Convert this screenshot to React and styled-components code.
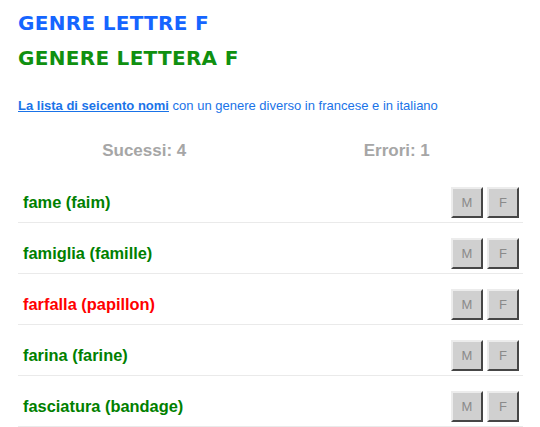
import styled, { createGlobalStyle } from "styled-components"

const GlobalStyle = createGlobalStyle`
    body {
        margin: 0;
        background: #fff;
        font-family: "Liberation Sans", Arial, sans-serif;
    }
`;

const Page = styled.div`
    padding: 6px 17px 0 18px;
`;

const Title = styled.h1`
    margin: 0;
    font-family: "DejaVu Sans", sans-serif;
    font-weight: bold;
    font-size: 20px;
    line-height: 35px;
    color: ${p => p.color};
    letter-spacing: 0.3px;
`;

const Intro = styled.p`
    margin: 22px 0 0;
    font-size: 13px;
    color: #1a73e8;
    line-height: 16px;

    a {
        color: #1a73e8;
        font-weight: bold;
        text-decoration: underline;
    }
`;

const Stats = styled.div`
    display: grid;
    grid-template-columns: 1fr 1fr;
    margin-top: 27px;
    margin-bottom: 11px;
`;

const Stat = styled.div`
    text-align: center;
    font-size: 17px;
    font-weight: bold;
    color: #a6a6a6;
    line-height: 20px;
`;

const Row = styled.div`
    display: flex;
    align-items: center;
    justify-content: space-between;
    box-sizing: border-box;
    height: 51px;
    border-bottom: 1px solid #eaeaea;
    padding: 10px 4px 0 5px;
`;

const Word = styled.span`
    font-size: 16.4px;
    font-weight: bold;
    color: ${p => (p.wrong ? "#ff0000" : "#008000")};
`;

const Buttons = styled.div`
    display: flex;
    gap: 4px;
`;

const GenderButton = styled.button`
    width: 32px;
    height: 31px;
    padding: 0;
    background: #d0d0d0;
    border: 2px outset #ececec;
    border-right-color: #9a9a9a;
    border-bottom-color: #9a9a9a;
    color: #8a8a8a;
    font-family: "Liberation Sans", Arial, sans-serif;
    font-size: 13px;
`;

const words = [
    { it: "fame (faim)" },
    { it: "famiglia (famille)" },
    { it: "farfalla (papillon)", wrong: true },
    { it: "farina (farine)" },
    { it: "fasciatura (bandage)" },
]

export default function App() {
    return (
        <>
            <GlobalStyle />
            <Page>
                <Title color="#1565ff">GENRE LETTRE F</Title>
                <Title color="#109010">GENERE LETTERA F</Title>
                <Intro>
                    <a href="#">La lista di seicento nomi</a> con un genere diverso in francese e in italiano
                </Intro>
                <Stats>
                    <Stat>Sucessi: 4</Stat>
                    <Stat>Errori: 1</Stat>
                </Stats>
                {words.map(w => (
                    <Row key={w.it}>
                        <Word wrong={w.wrong}>{w.it}</Word>
                        <Buttons>
                            <GenderButton>M</GenderButton>
                            <GenderButton>F</GenderButton>
                        </Buttons>
                    </Row>
                ))}
            </Page>
        </>
    )
}
